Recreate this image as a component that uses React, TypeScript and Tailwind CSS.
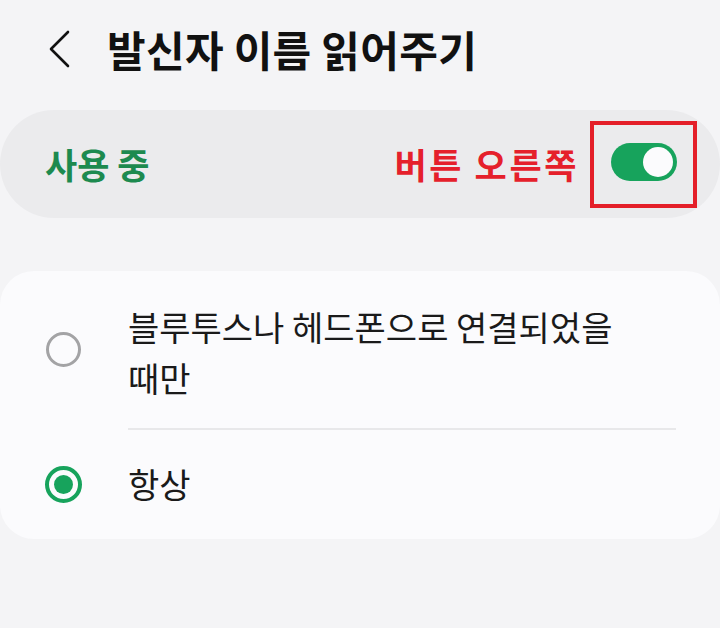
import React from "react";

function Radio({ checked }: { checked: boolean }) {
  if (checked) {
    return (
      <div className="w-[37px] h-[37px] rounded-full border-[4px] border-[#17a35c] flex items-center justify-center shrink-0">
        <div className="w-[19px] h-[19px] rounded-full bg-[#17a35c]" />
      </div>
    );
  }
  return <div className="w-[35px] h-[35px] rounded-full border-[3px] border-[#a3a3a5] shrink-0" />;
}

export default function App() {
  return (
    <div
      className="w-[720px] h-[628px] bg-[#f4f4f6] overflow-hidden"
      style={{ fontFamily: '"Noto Sans CJK KR", "Noto Sans", sans-serif' }}
    >
      {/* header */}
      <div className="h-[110px] flex items-center pl-[46px] pb-[12px]">
        <svg width="26" height="38" viewBox="0 0 26 38" className="shrink-0">
          <path d="M22 2 L5 19 L22 36" fill="none" stroke="#111" strokeWidth="2.6" strokeLinecap="round" strokeLinejoin="round" />
        </svg>
        <div className="ml-[35px] text-[42px] font-bold text-[#111] leading-none tracking-[0.3px]">
          발신자 이름 읽어주기
        </div>
      </div>

      {/* toggle pill */}
      <div className="h-[108px] rounded-[54px] bg-[#ebebed] flex items-center justify-between pl-[45px] pr-[23px]">
        <div className="text-[35px] font-bold text-[#1d8a4f] leading-none pb-[2px]">사용 중</div>
        <div className="flex items-center">
          <div className="text-[35px] font-bold text-[#e5202b] leading-none tracking-[2.6px] mr-[11px] pb-[2px]">버튼 오른쪽</div>
          <div className="w-[107px] h-[87px] border-[4px] border-[#e41f29] flex items-center justify-center pb-[4px]">
            <div className="w-[66px] h-[38px] rounded-full bg-[#17a35c] flex items-center justify-end pr-[4px]">
              <div className="w-[30px] h-[30px] rounded-full bg-[#fbfbfd]" />
            </div>
          </div>
        </div>
      </div>

      {/* options card */}
      <div className="mt-[53px] h-[268px] rounded-[34px] bg-[#fbfbfd] flex flex-col">
        <div className="h-[157px] flex items-center pl-[46px]">
          <Radio checked={false} />
          <div className="ml-[47px] text-[34px] leading-[51px] text-[#1a1a1a] pt-[4px]">
            블루투스나 헤드폰으로 연결되었을
            <br />
            때만
          </div>
        </div>
        <div className="ml-[128px] mr-[44px] h-[2px] bg-[#e8e8ea]" />
        <div className="flex-1 flex items-center pl-[45px]">
          <Radio checked={true} />
          <div className="ml-[46px] text-[34px] leading-none text-[#1a1a1a] pb-[2px]">항상</div>
        </div>
      </div>
    </div>
  );
}
